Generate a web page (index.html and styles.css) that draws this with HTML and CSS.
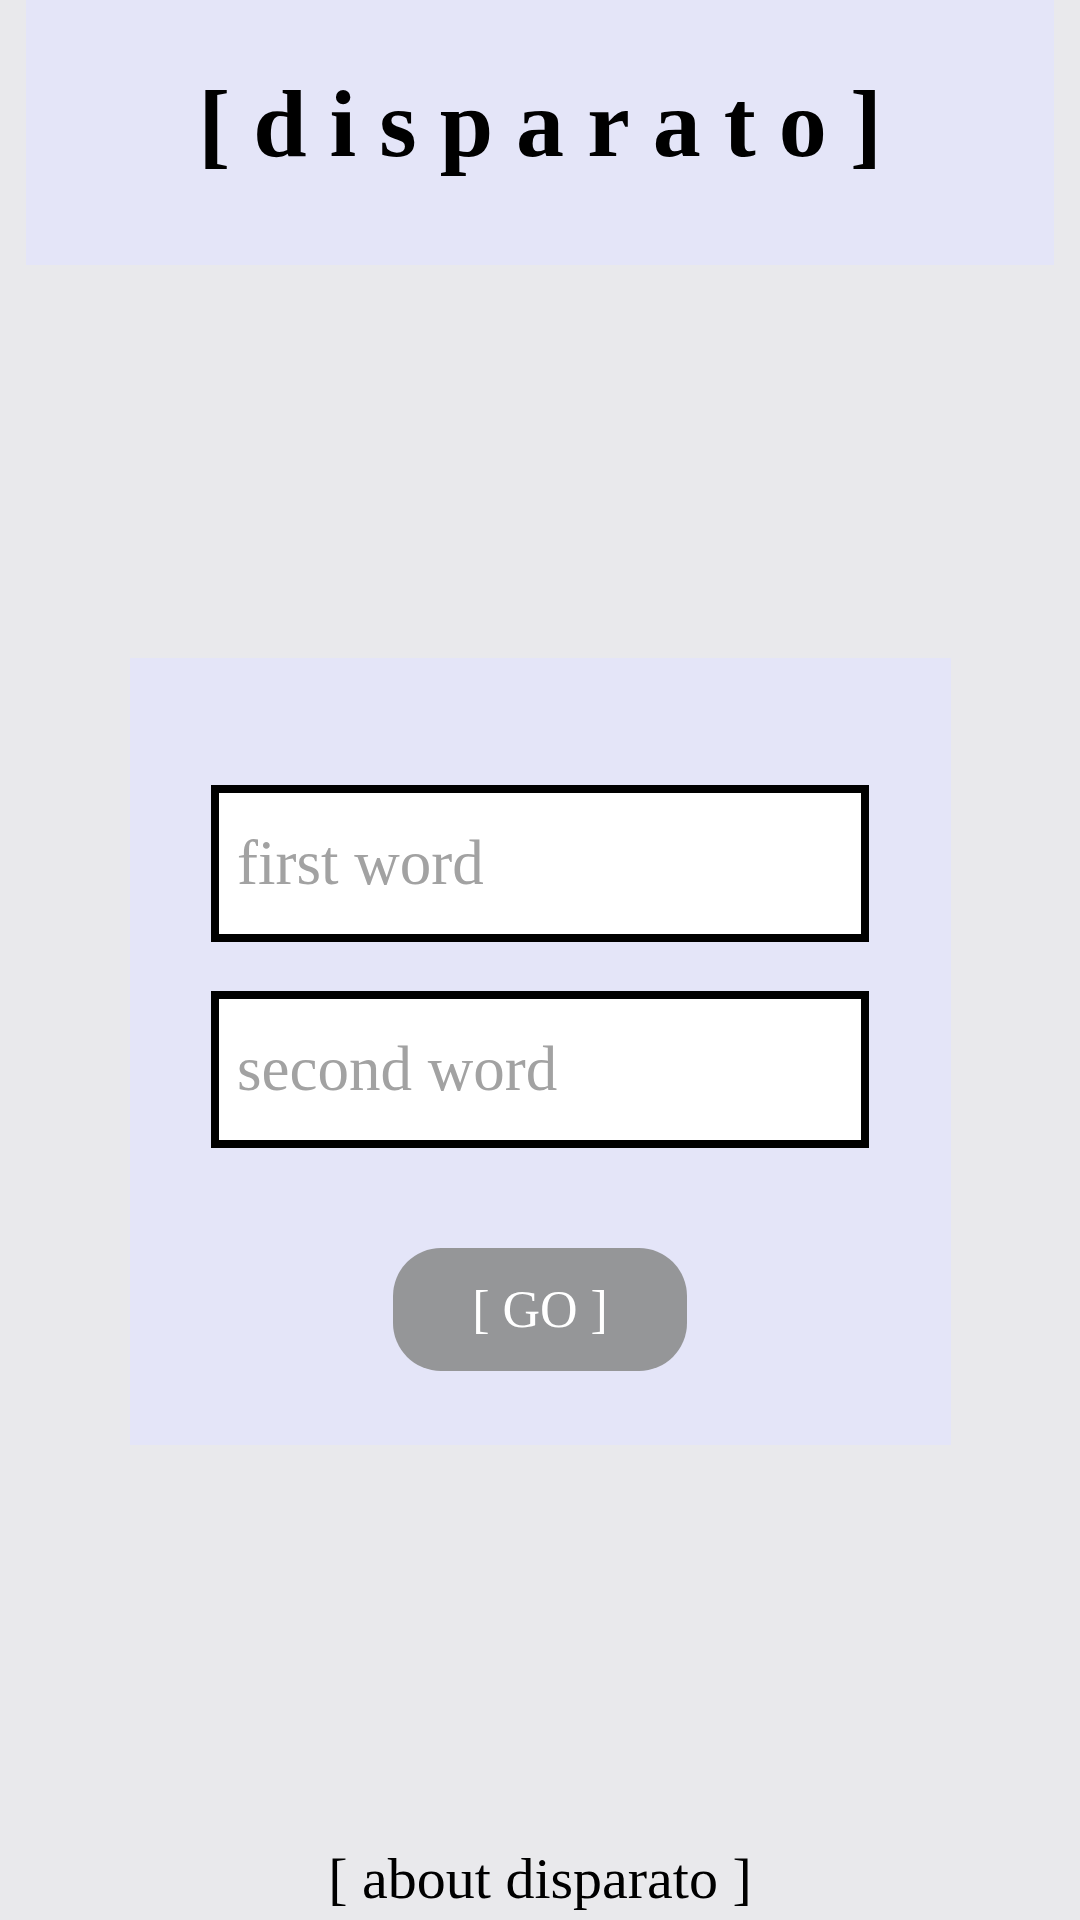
FILE: index.html
```html
<!DOCTYPE html>
<html lang="en">
<head>
<meta charset="utf-8">
<title>disparato</title>
<link rel="stylesheet" href="styles.css">
</head>
<body>
<div class="page">
  <header class="header">
    <h1 class="title">[disparato]</h1>
  </header>
  <main class="main">
    <form class="card">
      <input class="word" type="text" placeholder="first word">
      <input class="word" type="text" placeholder="second word">
      <button class="go" type="button">[ GO ]</button>
    </form>
  </main>
  <footer class="footer">
    <a class="about" href="#">[ about disparato ]</a>
  </footer>
</div>
</body>
</html>
```
FILE: styles.css
```css
html, body {
  margin: 0;
  padding: 0;
}
body {
  background: #e9e9ec;
  font-family: "Liberation Serif", "Times New Roman", serif;
  color: #000;
}
.page {
  height: 1920px;
  box-sizing: border-box;
  padding: 0 26px 8px;
  display: flex;
  flex-direction: column;
}
.header {
  background: #e4e5f8;
  height: 265px;
  box-sizing: border-box;
  padding-top: 68px;
  text-align: center;
}
.title {
  margin: 0;
  font-size: 96px;
  font-weight: bold;
  line-height: normal;
  letter-spacing: 0.24em;
  padding-left: 0.24em;
}
.main {
  display: flex;
  justify-content: center;
  margin-top: 393px;
}
.card {
  width: 821px;
  height: 787px;
  box-sizing: border-box;
  background: #e4e5f8;
  padding-top: 127px;
  display: flex;
  flex-direction: column;
  align-items: center;
}
.word {
  width: 658px;
  height: 157px;
  flex: none;
  box-sizing: border-box;
  border: 8px solid #000;
  border-radius: 0;
  background: #fff;
  padding: 0 18px;
  font-family: "Liberation Serif", "Times New Roman", serif;
  font-size: 63px;
  color: #000;
  outline: none;
  margin: 0;
}
.word + .word {
  margin-top: 49px;
}
.word::placeholder {
  color: #a2a2a2;
  opacity: 1;
}
.go {
  margin-top: 100px;
  width: 294px;
  height: 123px;
  flex: none;
  border: none;
  border-radius: 48px;
  background: #959698;
  color: #fff;
  font-family: "Liberation Serif", "Times New Roman", serif;
  font-size: 52px;
  padding: 0;
}
.footer {
  margin-top: auto;
  text-align: center;
}
.about {
  font-size: 58px;
  color: #000;
  text-decoration: none;
  line-height: normal;
}
```
